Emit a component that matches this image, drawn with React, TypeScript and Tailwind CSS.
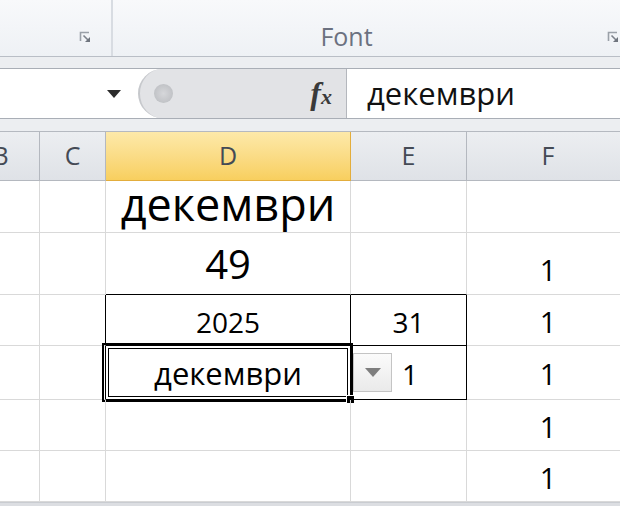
import React from 'react'

const ui = { fontFamily: '"Open Sans", "Noto Sans", sans-serif' }

function Launcher() {
  return (
    <svg width="12" height="12" viewBox="0 0 12 12" className="shrink-0">
      <path d="M1.5 10V1.5H10" fill="none" stroke="#9aa0a8" strokeWidth="1.6" />
      <path d="M4.5 4.5L9 9" stroke="#7b818a" strokeWidth="1.6" />
      <path d="M11 6V11H6Z" fill="#6f757e" />
    </svg>
  )
}

const cols = ['B', 'C', 'D', 'E', 'F']
const rowHeights = ['h-[52px]', 'h-[62px]', 'h-[51px]', 'h-[54px]', 'h-[51px]', 'h-[51px]']

function Cell({ children, className = '' }: { children?: React.ReactNode; className?: string }) {
  return (
    <div className={`relative flex items-end justify-center border-r border-b border-[#d9d9d9] ${className}`}>
      {children}
    </div>
  )
}

export default function App() {
  return (
    <div className="w-[620px] h-[506px] overflow-hidden bg-white flex flex-col" style={ui}>
      {/* ribbon */}
      <div className="h-[57px] flex bg-linear-to-b from-[#f8f9fb] to-[#eef1f5] border-b border-[#b9bec6] shrink-0">
        <div className="w-[113px] flex items-end justify-end pr-[20px] pb-[13px] border-r-2 border-[#d8dce2]">
          <Launcher />
        </div>
        <div className="flex-1 relative flex items-end justify-center pr-[40px]">
          <span className="text-[25px] text-[#6b7180] leading-none pb-[7px]">Font</span>
          <div className="absolute right-[1px] bottom-[13px]">
            <Launcher />
          </div>
        </div>
      </div>

      <div className="h-[11px] bg-[#eceef1] shrink-0" />

      {/* formula bar */}
      <div className="h-[51px] flex border-y border-[#a9aeb6] bg-white shrink-0">
        <div className="w-[138px] flex items-center justify-end pr-[17px]">
          <svg width="14" height="8" viewBox="0 0 14 8">
            <path d="M0 0H14L7 8Z" fill="#2b2b2b" />
          </svg>
        </div>
        <div className="w-[209px] relative flex items-center justify-end pr-[14px] bg-[#e2e3e6] rounded-l-[26px] border-l-2 border-[#c6c8cc] border-r border-r-[#b4b7bd]">
          <div className="absolute left-[14px] top-[15px] w-[19px] h-[19px] rounded-full bg-radial from-[#d6d7da] to-[#b8babe]" />
          <span
            className="italic font-bold text-[32px] leading-none text-[#3a3a3a] pb-[2px]"
            style={{ fontFamily: '"Liberation Serif", serif' }}
          >
            f<span className="text-[22px]">x</span>
          </span>
        </div>
        <div className="flex-1 flex items-center pl-[20px]">
          <span className="text-[31px] text-[#111] leading-none pb-[1px]">декември</span>
        </div>
      </div>

      <div className="h-[13px] bg-[#eceef1] border-b border-[#b5b9c0] shrink-0" />

      {/* sheet */}
      <div className="flex-1 overflow-hidden">
        <div className="grid grid-cols-[78px_66px_245px_116px_163px] -ml-[38px] w-max">
          {cols.map((c) => (
            <div
              key={c}
              className={`h-[49px] flex items-center justify-center text-[25px] text-[#444a55] border-r border-b ${
                c === 'D'
                  ? 'bg-linear-to-b from-[#fde9a9] to-[#f8cf5e] border-[#e3ad3c]'
                  : 'bg-linear-to-b from-[#eceef1] to-[#dfe2e7] border-[#b4b8bf]'
              }`}
            >
              {c}
            </div>
          ))}

          {/* row 1 */}
          <Cell className={rowHeights[0]} />
          <Cell className={rowHeights[0]} />
          <Cell className={rowHeights[0]}>
            <span className="text-[45px] leading-none pb-[6px] text-black">декември</span>
          </Cell>
          <Cell className={rowHeights[0]} />
          <Cell className={rowHeights[0]} />

          {/* row 2 */}
          <Cell className={rowHeights[1]} />
          <Cell className={rowHeights[1]} />
          <Cell className={`${rowHeights[1]} border-b-black`}>
            <span className="text-[40px] leading-none pb-[10px] text-black">49</span>
          </Cell>
          <Cell className={`${rowHeights[1]} border-b-black`} />
          <Cell className={rowHeights[1]}>
            <span className="text-[29px] leading-none pb-[10px] text-black">1</span>
          </Cell>

          {/* row 3 */}
          <Cell className={rowHeights[2]} />
          <Cell className={`${rowHeights[2]} border-r-black`} />
          <Cell className={`${rowHeights[2]} border-r-black border-b-black`}>
            <span className="text-[28px] leading-none pb-[9px] text-black">2025</span>
          </Cell>
          <Cell className={`${rowHeights[2]} border-r-black border-b-black`}>
            <span className="text-[28px] leading-none pb-[9px] text-black">31</span>
          </Cell>
          <Cell className={rowHeights[2]}>
            <span className="text-[29px] leading-none pb-[9px] text-black">1</span>
          </Cell>

          {/* row 4 */}
          <Cell className={rowHeights[3]} />
          <Cell className={`${rowHeights[3]} border-r-black`} />
          <Cell className={`${rowHeights[3]} border-r-black border-b-black`}>
            <span className="text-[31px] leading-none pb-[10px] text-black">декември</span>
            <div className="absolute -inset-[3px] -left-[4px] border-2 border-black pointer-events-none" />
            <div className="absolute inset-[2px] border border-black pointer-events-none" />
            <div className="absolute -right-[5px] -bottom-[5px] w-[9px] h-[9px] bg-black border border-white" />
          </Cell>
          <Cell className={`${rowHeights[3]} border-r-black border-b-black justify-start`}>
            <div className="flex items-center h-full pl-[2px] gap-[10px]">
              <div className="w-[39px] h-[39px] flex items-center justify-center bg-linear-to-b from-[#fbfbfb] to-[#eaeaea] border border-[#c4c4c4]">
                <svg width="16" height="9" viewBox="0 0 16 9">
                  <path d="M0 0H16L8 9Z" fill="#7e7e7e" />
                </svg>
              </div>
              <span className="text-[28px] leading-none pt-[3px] text-black">1</span>
            </div>
          </Cell>
          <Cell className={rowHeights[3]}>
            <span className="text-[29px] leading-none pb-[11px] text-black">1</span>
          </Cell>

          {/* rows 5-6 */}
          {[4, 5].map((r) => (
            <React.Fragment key={r}>
              <Cell className={rowHeights[r]} />
              <Cell className={rowHeights[r]} />
              <Cell className={rowHeights[r]} />
              <Cell className={rowHeights[r]} />
              <Cell className={rowHeights[r]}>
                <span className="text-[29px] leading-none pb-[9px] text-black">1</span>
              </Cell>
            </React.Fragment>
          ))}
        </div>
      </div>

      <div className="h-[4px] bg-[#dcdee2] border-t border-[#c9ccd1] shrink-0" />
    </div>
  )
}
